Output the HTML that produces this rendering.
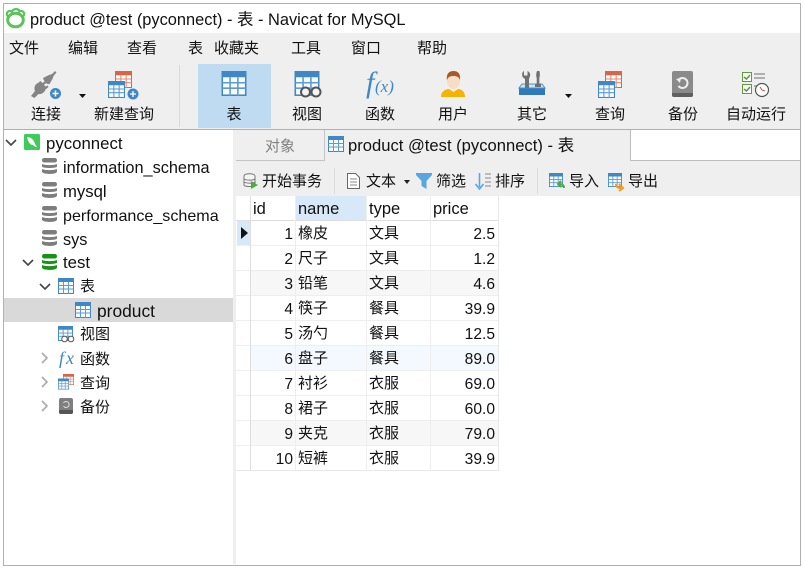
<!DOCTYPE html>
<html><head><meta charset="utf-8"><style>
html,body{margin:0;padding:0;background:#fff}
body{width:804px;height:569px;position:relative;overflow:hidden;font-family:"Liberation Sans","Noto Sans CJK SC",sans-serif;font-size:15px;color:#111}
.a{position:absolute;white-space:nowrap}
.m,.l{position:absolute;white-space:nowrap;font-size:15px;line-height:20px}
.m{margin-top:1px}
.l{width:80px;text-align:center;top:105px}
.t{position:absolute;white-space:nowrap;line-height:20px;font-size:16.3px;margin-top:1px}
.z{font-size:15px;margin-top:0}
.c{position:absolute;white-space:nowrap;line-height:25px;font-size:15.6px;margin-top:1px}
.r{text-align:right;left:250px;width:43px}
.p{text-align:right;left:431px;width:64px}
.n{left:298px;font-size:15px;margin-top:0}.y{left:369px;font-size:15px;margin-top:0}
.b{position:absolute;white-space:nowrap;font-size:15px;line-height:20px;top:172px}
svg{position:absolute;overflow:visible}
</style></head><body>
<svg width="0" height="0" style="position:absolute"><defs>
<symbol id="tb" viewBox="0 0 16 16"><rect x=".5" y=".5" width="15" height="15" fill="#f8fbfe" stroke="#3f88c5"/><rect x="0" y="0" width="16" height="4" fill="#3f88c5"/><path d="M.5 7.500h15M.5 11h15M5.500 4v12M10.500 4v12" stroke="#5d9bd0" fill="none"/></symbol>
<symbol id="rd" viewBox="0 0 16 16"><rect x=".5" y=".5" width="15" height="15" fill="#fff" stroke="#dc6446"/><rect x="0" y="0" width="16" height="4" fill="#dc6446"/><path d="M.5 7.500h15M.5 11h15M5.500 4v12M10.500 4v12" stroke="#e58a70" fill="none"/></symbol>
<symbol id="db" viewBox="0 0 15 16"><rect x="0" y="0" width="15" height="4.500" rx="2.200" fill="currentColor"/><path d="M0 6c3 1.500 12 1.500 15 0v2.500c0 2-15 2-15 0zM0 11c3 1.500 12 1.500 15 0v2.500c0 3.300-15 3.300-15 0z" fill="currentColor"/></symbol>
</defs></svg>

<!-- frame -->
<div class="a" style="left:3px;top:3px;width:796px;height:561px;border:1px solid #b0b0b0"></div>
<!-- title -->
<svg style="left:5px;top:7px" width="22" height="22" viewBox="0 0 22 22"><circle cx="4.800" cy="7" r="3" fill="#fff" stroke="#5cc35c" stroke-width="2.200"/><circle cx="16.200" cy="7" r="3" fill="#fff" stroke="#5cc35c" stroke-width="2.200"/><path d="M7 4c2-2.500 6-2.500 8 0" fill="none" stroke="#5cc35c" stroke-width="2.200"/><ellipse cx="10.500" cy="13" rx="7.800" ry="6.800" fill="#fff" stroke="#5cc35c" stroke-width="3"/></svg>
<div class="a" style="left:30px;top:10px;line-height:20px;font-size:16.4px">product @test (pyconnect) - 表 - Navicat for MySQL</div>
<!-- menu+toolbar bg -->
<div class="a" style="left:4px;top:33px;width:796px;height:96px;background:#efefef"></div>
<div class="m" style="left:9px;top:38px">文件</div>
<div class="m" style="left:68px;top:38px">编辑</div>
<div class="m" style="left:127px;top:38px">查看</div>
<div class="m" style="left:188px;top:38px">表</div>
<div class="m" style="left:214px;top:38px">收藏夹</div>
<div class="m" style="left:291px;top:38px">工具</div>
<div class="m" style="left:351px;top:38px">窗口</div>
<div class="m" style="left:417px;top:38px">帮助</div>

<div class="a" style="left:179px;top:65px;width:1px;height:62px;background:#d9d9d9"></div>
<div class="a" style="left:198px;top:64px;width:73px;height:64px;background:#bfdbf2"></div>

<!-- connect icon -->
<svg style="left:30px;top:70px" width="32" height="30" viewBox="0 0 32 30"><g fill="#858585"><path d="M13 8l6-3 3-1 3-3 1.500 1.500-3 3.500-1 3-3 5c-2 .5-5-1-6.500-6z"/><path d="M1 26l4-5c-1.500-3 0-7 3-8l2.500-2 2 2 3-2 1 1.500-2.500 2.500 1.500 1.500 2-1 1 1.500-3 2.500c-1 3-4 5-7 4.500l-4 4z"/></g><circle cx="25.500" cy="23.500" r="5.500" fill="#3f88c5"/><path d="M22.500 23.500h6M25.500 20.500v6" stroke="#fff" stroke-width="1.500"/></svg>
<svg style="left:79px;top:94px" width="7" height="4"><path d="M0 0h7L3.500 4z" fill="#111"/></svg>
<div class="l" style="left:6px">连接</div>
<!-- new query -->
<svg style="left:115px;top:71px" width="18" height="18"><use href="#rd" width="17" height="17"/></svg>
<svg style="left:108px;top:81px" width="17" height="17"><use href="#tb" width="17" height="17"/></svg>
<svg style="left:127px;top:88px" width="13" height="11"><circle cx="6" cy="6" r="5.500" fill="#3f88c5"/><path d="M3 6h6M6 3v6" stroke="#fff" stroke-width="1.300"/></svg>
<div class="l" style="left:84px">新建查询</div>
<!-- table -->
<svg style="left:221px;top:71px" width="26" height="25"><use href="#tb" width="26" height="25"/></svg>
<div class="l" style="left:194px">表</div>
<!-- view -->
<svg style="left:294px;top:71px" width="27" height="26"><use href="#tb" width="26" height="25"/><circle cx="11.500" cy="21" r="4.500" fill="#f4f4f4" stroke="#555" stroke-width="2"/><circle cx="22" cy="21" r="4.500" fill="#f4f4f4" stroke="#555" stroke-width="2"/></svg>
<div class="l" style="left:267px">视图</div>
<!-- function -->
<div class="a" style="left:366px;top:66px;font:italic 30px/34px 'Liberation Serif',serif;color:#3f88c5">f</div>
<div class="a" style="left:375px;top:78px;font:italic 17px/18px 'Liberation Serif',serif;color:#3f88c5">(x)</div>
<div class="l" style="left:340px">函数</div>
<!-- user -->
<svg style="left:441px;top:70px" width="25" height="28" viewBox="0 0 25 28"><path d="M0 27c0-6 5-8 8-8l4.500 3 4.500-3c3 0 7 2 7 8z" fill="#f4b400"/><ellipse cx="12.500" cy="11" rx="6.500" ry="8" fill="#f8dcc8"/><path d="M6 10C5 3 9 1 12.500 1S20 3 19 10c-1-3-3-4-6.500-4S7 7 6 10z" fill="#a85a20"/></svg>
<div class="l" style="left:413px">用户</div>
<!-- other -->
<svg style="left:519px;top:70px" width="28" height="28" viewBox="0 0 28 28"><path d="M0 18h26v7H0z" fill="#2f7ab8"/><path d="M3 14h20l3 4H0z" fill="#cfe3f3" stroke="#4a94d0"/><path d="M5 1v4.500h3.500V1c2.500 1 3.500 4 2 6.500L10 9v9H6V9L4 7.500C2.500 5 3 2 5 1z" fill="#707070"/><path d="M18 1h2.500c.5 2.500.5 5-.2 7v6h1.700v3h-6v-3h1.700V8c-.7-2-.7-4.500.3-7z" fill="#707070"/></svg>
<svg style="left:565px;top:94px" width="7" height="4"><path d="M0 0h7L3.500 4z" fill="#111"/></svg>
<div class="l" style="left:492px">其它</div>
<!-- query -->
<svg style="left:605px;top:71px" width="18" height="18"><use href="#rd" width="17" height="17"/></svg>
<svg style="left:598px;top:81px" width="17" height="17"><use href="#tb" width="17" height="17"/></svg>
<div class="l" style="left:570px">查询</div>
<!-- backup -->
<svg style="left:672px;top:71px" width="21" height="26" viewBox="0 0 21 26"><rect width="21" height="26" rx="2" fill="#8a8a8a"/><path d="M0 22h21v2a2 2 0 0 1-2 2H2a2 2 0 0 1-2-2z" fill="#5f5f5f"/><path d="M6.500 9a5 5 0 1 1 0 6" fill="none" stroke="#eee" stroke-width="2"/><path d="M4 8l5-1-1 5z" fill="#eee"/></svg>
<div class="l" style="left:643px">备份</div>
<!-- autorun -->
<svg style="left:742px;top:72px" width="28" height="26" viewBox="0 0 28 26"><rect x=".5" y=".5" width="9" height="9" fill="#fff" stroke="#5d9e3c"/><rect x=".5" y="12.500" width="9" height="9" fill="#fff" stroke="#5d9e3c"/><path d="M2 5l2.500 2L8 3M2 17l2.500 2L8 15" fill="none" stroke="#5d9e3c" stroke-width="1.600"/><path d="M12 2h11M12 6h11M12 14h4" stroke="#999" stroke-width="1.600"/><circle cx="20" cy="18" r="6.500" fill="#fff" stroke="#555" stroke-width="1.200"/><path d="M20 18l-2-3M20 18l3 1" stroke="#c0503c"/></svg>
<div class="l" style="left:716px">自动运行</div>

<!-- horizontal divider -->
<div class="a" style="left:4px;top:129px;width:796px;height:1px;background:#b0b0b0"></div>

<!-- left tree -->
<div class="a" style="left:233px;top:130px;width:3px;height:434px;background:#efefef"></div>
<div class="a" style="left:4px;top:298px;width:229px;height:24px;background:#d9d9d9"></div>

<svg style="left:5px;top:139px" width="12" height="8"><path d="M1 1l5 5 5-5" fill="none" stroke="#444" stroke-width="1.600"/></svg>
<svg style="left:24px;top:134px" width="16" height="16" viewBox="0 0 16 16"><rect width="16" height="16" rx="1.500" fill="#3dcb5a"/><path d="M3 3c4 0 7 3 8 7l2 3c-2 0-3-1-4-2-3 0-5-3-6-8z" fill="#fff"/></svg>
<div class="t" style="left:46px;top:133px;font-size:16.8px">pyconnect</div>

<svg style="left:42px;top:158px;color:#7d7d7d" width="15" height="16"><use href="#db" width="15" height="16"/></svg>
<div class="t" style="left:63px;top:157px">information_schema</div>
<svg style="left:42px;top:182px;color:#7d7d7d" width="15" height="16"><use href="#db" width="15" height="16"/></svg>
<div class="t" style="left:63px;top:181px;font-size:16.7px">mysql</div>
<svg style="left:42px;top:206px;color:#7d7d7d" width="15" height="16"><use href="#db" width="15" height="16"/></svg>
<div class="t" style="left:63px;top:205px;font-size:16.1px">performance_schema</div>
<svg style="left:42px;top:230px;color:#7d7d7d" width="15" height="16"><use href="#db" width="15" height="16"/></svg>
<div class="t" style="left:63px;top:229px">sys</div>
<svg style="left:22px;top:259px" width="12" height="8"><path d="M1 1l5 5 5-5" fill="none" stroke="#444" stroke-width="1.600"/></svg>
<svg style="left:42px;top:254px;color:#149414" width="15" height="16"><use href="#db" width="15" height="16"/></svg>
<div class="t" style="left:63px;top:252px;font-size:16.8px">test</div>

<svg style="left:39px;top:283px" width="12" height="8"><path d="M1 1l5 5 5-5" fill="none" stroke="#444" stroke-width="1.600"/></svg>
<svg style="left:58px;top:278px" width="16" height="16"><use href="#tb" width="16" height="16"/></svg>
<div class="t z" style="left:80px;top:277px">表</div>
<svg style="left:75px;top:302px" width="16" height="16"><use href="#tb" width="16" height="16"/></svg>
<div class="t" style="left:97px;top:300px;font-size:17.4px">product</div>
<svg style="left:58px;top:326px" width="17" height="17"><use href="#tb" width="15" height="15"/><circle cx="6.500" cy="13" r="2.800" fill="#fff" stroke="#555"/><circle cx="13" cy="13" r="2.800" fill="#fff" stroke="#555"/></svg>
<div class="t z" style="left:80px;top:325px">视图</div>
<svg style="left:41px;top:352px" width="8" height="12"><path d="M1 1l5 5-5 5" fill="none" stroke="#aaa" stroke-width="1.600"/></svg>
<div class="a" style="left:59px;top:348px;font:italic 18px/21px 'Liberation Serif',serif;letter-spacing:2px;color:#3f88c5">fx</div>
<div class="t z" style="left:80px;top:350px">函数</div>
<svg style="left:41px;top:376px" width="8" height="12"><path d="M1 1l5 5-5 5" fill="none" stroke="#aaa" stroke-width="1.600"/></svg>
<svg style="left:63px;top:374px" width="11" height="11"><use href="#rd" width="11" height="11"/></svg>
<svg style="left:58px;top:378px" width="11" height="12"><use href="#tb" width="11" height="12"/></svg>
<div class="t z" style="left:80px;top:374px">查询</div>
<svg style="left:41px;top:400px" width="8" height="12"><path d="M1 1l5 5-5 5" fill="none" stroke="#aaa" stroke-width="1.600"/></svg>
<svg style="left:59px;top:398px" width="14" height="16" viewBox="0 0 14 16"><rect width="14" height="16" rx="2" fill="#7f7f7f"/><path d="M0 12h14v2a2 2 0 0 1-2 2H2a2 2 0 0 1-2-2z" fill="#555"/><path d="M4.500 5a3 3 0 1 1 0 3" fill="none" stroke="#ddd"/></svg>
<div class="t z" style="left:80px;top:398px">备份</div>

<!-- tabs -->
<div class="a" style="left:236px;top:130px;width:564px;height:31px;background:#fff"></div>
<div class="a" style="left:236px;top:130px;width:88px;height:30px;background:#efefef;border-right:1px solid #c4c4c4;border-bottom:1px solid #c4c4c4"></div>
<div class="a" style="left:265px;top:137px;font-size:15px;line-height:20px;color:#808080">对象</div>
<div class="a" style="left:325px;top:130px;width:305px;height:32px;background:#efefef;border-right:1px solid #bcbcbc"></div>
<div class="a" style="left:631px;top:160px;width:169px;height:1px;background:#bcbcbc"></div>
<svg style="left:328px;top:136px" width="16" height="16"><use href="#tb" width="16" height="16"/></svg>
<div class="a" style="left:348px;top:136px;font-size:16.6px;line-height:20px">product @test (pyconnect) - 表</div>

<!-- table toolbar -->
<div class="a" style="left:236px;top:161px;width:564px;height:35px;background:#efefef"></div>
<div class="a" style="left:334px;top:168px;width:1px;height:26px;background:#dcdcdc"></div>
<div class="a" style="left:537px;top:168px;width:1px;height:26px;background:#dcdcdc"></div>

<svg style="left:243px;top:173px" width="16" height="16" viewBox="0 0 16 16"><path d="M1 3c0-3 11-3 11 0v9c0 2-11 2-11 0z" fill="#f4f4f4" stroke="#777"/><path d="M1 6c2 1.500 9 1.500 11 0M1 9c2 1.500 9 1.500 11 0" fill="none" stroke="#777"/><path d="M8 8l7 4-7 4z" fill="#4cae3c"/></svg>
<div class="b" style="left:262px">开始事务</div>
<svg style="left:347px;top:173px" width="13" height="16" viewBox="0 0 13 16"><path d="M.5.5h8l4 4v11H.5z" fill="#fff" stroke="#666"/><path d="M3 6h7M3 9h7M3 12h7" stroke="#888"/></svg>
<div class="b" style="left:366px">文本</div>
<svg style="left:404px;top:180px" width="6" height="4"><path d="M0 0h6L3 4z" fill="#222"/></svg>
<svg style="left:416px;top:173px" width="16" height="16" viewBox="0 0 16 16"><path d="M0 0h16v2l-5.500 6v8L5.500 13V8L0 2z" fill="#5aa7e0"/></svg>
<div class="b" style="left:436px">筛选</div>
<svg style="left:475px;top:173px" width="16" height="17" viewBox="0 0 16 17"><path d="M4.500 0v14M.5 11l4 5 4-5" fill="none" stroke="#5aa7e0" stroke-width="1.600"/><path d="M10 1h6M10 5h6M10 9h6M10 13h6" stroke="#888"/></svg>
<div class="b" style="left:495px">排序</div>
<svg style="left:549px;top:173px" width="16" height="17"><use href="#tb" width="14" height="14"/><path d="M15 15c0-3-2-4-5-4M12 8l-3 3 3 3" fill="none" stroke="#4cae3c" stroke-width="2"/></svg>
<div class="b" style="left:569px">导入</div>
<svg style="left:608px;top:173px" width="16" height="17"><use href="#tb" width="14" height="14"/><path d="M8 11c0 3 2 4 5 4M11 11l4 4-4 3" fill="none" stroke="#f39c1f" stroke-width="2"/></svg>
<div class="b" style="left:628px">导出</div>

<!-- grid -->
<div class="a" style="left:296px;top:196px;width:70px;height:24px;background:#d7e9f8"></div>
<div class="a" style="left:237px;top:221px;width:13px;height:24px;background:#d7e9f8"></div>
<div class="a" style="left:251px;top:271px;width:247px;height:24px;background:#f7f7f7"></div>
<div class="a" style="left:251px;top:346px;width:247px;height:24px;background:#f3f9fe"></div>
<div class="a" style="left:251px;top:421px;width:247px;height:24px;background:#f7f7f7"></div>

<div class="a" style="left:236px;top:220px;width:262px;height:1px;background:#dedede"></div>
<div class="a" style="left:236px;top:245px;width:262px;height:1px;background:#eee"></div>
<div class="a" style="left:236px;top:270px;width:262px;height:1px;background:#eee"></div>
<div class="a" style="left:236px;top:295px;width:262px;height:1px;background:#eee"></div>
<div class="a" style="left:236px;top:320px;width:262px;height:1px;background:#eee"></div>
<div class="a" style="left:236px;top:345px;width:262px;height:1px;background:#eee"></div>
<div class="a" style="left:236px;top:370px;width:262px;height:1px;background:#eee"></div>
<div class="a" style="left:236px;top:395px;width:262px;height:1px;background:#eee"></div>
<div class="a" style="left:236px;top:420px;width:262px;height:1px;background:#eee"></div>
<div class="a" style="left:236px;top:445px;width:262px;height:1px;background:#eee"></div>
<div class="a" style="left:236px;top:470px;width:262px;height:1px;background:#e8e8e8"></div>
<div class="a" style="left:250px;top:196px;width:1px;height:275px;background:#dedede"></div>
<div class="a" style="left:295px;top:196px;width:1px;height:275px;background:#eee"></div>
<div class="a" style="left:366px;top:196px;width:1px;height:275px;background:#eee"></div>
<div class="a" style="left:430px;top:196px;width:1px;height:275px;background:#eee"></div>
<div class="a" style="left:498px;top:196px;width:1px;height:275px;background:#e8e8e8"></div>

<svg style="left:241px;top:227px" width="7" height="12"><path d="M0 0l7 6-7 6z" fill="#111"/></svg>
<div class="c" style="left:253px;top:196px;font-size:16.500px">id</div>
<div class="c" style="left:298px;top:196px;font-size:16.500px">name</div>
<div class="c" style="left:369px;top:196px;font-size:16.500px">type</div>
<div class="c" style="left:433px;top:196px;font-size:16.500px">price</div>

<div class="c r" style="top:221px">1</div><div class="c n" style="top:221px">橡皮</div><div class="c y" style="top:221px">文具</div><div class="c p" style="top:221px">2.5</div>
<div class="c r" style="top:246px">2</div><div class="c n" style="top:246px">尺子</div><div class="c y" style="top:246px">文具</div><div class="c p" style="top:246px">1.2</div>
<div class="c r" style="top:271px">3</div><div class="c n" style="top:271px">铅笔</div><div class="c y" style="top:271px">文具</div><div class="c p" style="top:271px">4.6</div>
<div class="c r" style="top:296px">4</div><div class="c n" style="top:296px">筷子</div><div class="c y" style="top:296px">餐具</div><div class="c p" style="top:296px">39.9</div>
<div class="c r" style="top:321px">5</div><div class="c n" style="top:321px">汤勺</div><div class="c y" style="top:321px">餐具</div><div class="c p" style="top:321px">12.5</div>
<div class="c r" style="top:346px">6</div><div class="c n" style="top:346px">盘子</div><div class="c y" style="top:346px">餐具</div><div class="c p" style="top:346px">89.0</div>
<div class="c r" style="top:371px">7</div><div class="c n" style="top:371px">衬衫</div><div class="c y" style="top:371px">衣服</div><div class="c p" style="top:371px">69.0</div>
<div class="c r" style="top:396px">8</div><div class="c n" style="top:396px">裙子</div><div class="c y" style="top:396px">衣服</div><div class="c p" style="top:396px">60.0</div>
<div class="c r" style="top:421px">9</div><div class="c n" style="top:421px">夹克</div><div class="c y" style="top:421px">衣服</div><div class="c p" style="top:421px">79.0</div>
<div class="c r" style="top:446px">10</div><div class="c n" style="top:446px">短裤</div><div class="c y" style="top:446px">衣服</div><div class="c p" style="top:446px">39.9</div>
</body></html>
